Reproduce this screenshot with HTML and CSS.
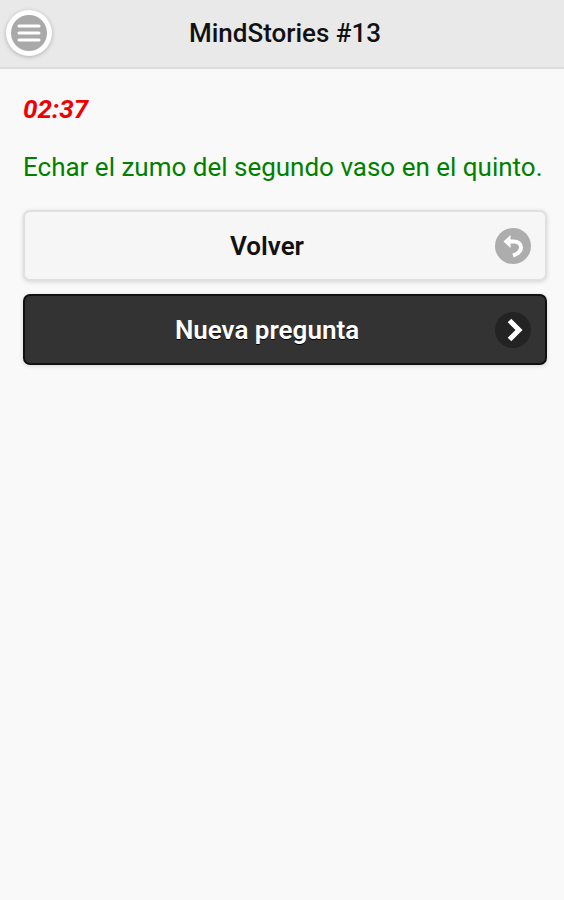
FILE: index.html
```
<!DOCTYPE html>
<html lang="es">
<head>
    <meta charset="UTF-8">
    <meta name="viewport" content="width=device-width, initial-scale=1.0">
    <title>MindStories #13</title>
    <link rel="stylesheet" href="styles.css">
</head>
<body>
    <header class="header">
        <button type="button" class="menu-btn" aria-label="Menú">
            <svg class="icon" viewBox="0 0 36 36">
                <circle cx="18" cy="18" r="18" fill="#a9a9a9"/>
                <path d="M8 11h20M8 18h20M8 25h20" fill="none" stroke="#fff" stroke-width="3" stroke-linecap="round"/>
            </svg>
        </button>
        <h1 class="title">MindStories #13</h1>
    </header>

    <main class="content">
        <p class="timer">02:37</p>
        <p class="answer">Echar el zumo del segundo vaso en el quinto.</p>

        <div class="actions">
            <button type="button" class="btn">
                <span class="btn-text">Volver</span>
                <svg class="icon" viewBox="0 0 36 36">
                    <circle cx="18" cy="18" r="18" fill="#adadad"/>
                    <path d="M14 13.500h4.500c5 0 7.500 2.500 7.500 6 0 4-3.500 6.500-8 8" fill="none" stroke="#fff" stroke-width="4"/>
                    <path d="M8.500 13.500l7-6.500v13z" fill="#fff"/>
                </svg>
            </button>
            <button type="button" class="btn btn-dark">
                <span class="btn-text">Nueva pregunta</span>
                <svg class="icon" viewBox="0 0 36 36">
                    <circle cx="18" cy="18" r="18" fill="#232323"/>
                    <path d="M14.500 8.500l9.500 9.500-9.500 9.500" fill="none" stroke="#fff" stroke-width="5"/>
                </svg>
            </button>
        </div>
    </main>
</body>
</html>
```

FILE: styles.css
```
* {
    margin: 0;
    padding: 0;
    box-sizing: border-box;
}
body {
    font-family: Roboto, sans-serif;
    font-size: 26px;
    line-height: 32px;
    background: #f9f9f9;
    color: #111;
}
.header {
    display: grid;
    grid-template-columns: 46px 1fr 40px;
    align-items: center;
    height: 69px;
    padding: 0 6px 2px;
    background: #e9e9e9;
    border-bottom: 2px solid #dcdcdc;
}
.menu-btn {
    width: 46px;
    height: 46px;
    padding: 5px;
    background: #fff;
    border: none;
    border-radius: 50%;
    box-shadow: 0 1px 4px rgba(0,0,0,0.25);
    cursor: pointer;
}
.icon {
    display: block;
    width: 36px;
    height: 36px;
}
.title {
    font-size: 26px;
    font-weight: 500;
    text-align: center;
    text-shadow: 0 1px 0 #eee;
}
.content {
    padding: 24px 17px 24px 23px;
}
.timer {
    margin-bottom: 26px;
    color: #f00000;
    font-weight: bold;
    font-style: italic;
}
.answer {
    margin-bottom: 27px;
    color: #008000;
}
.actions {
    display: grid;
    gap: 13px;
}
.btn {
    display: flex;
    align-items: center;
    height: 71px;
    padding: 0 14px;
    background: #f6f6f6;
    border: 2px solid #e0e0e0;
    border-radius: 7px;
    box-shadow: 0 1px 4px rgba(0,0,0,0.15);
    color: #111;
    font-family: inherit;
    font-size: 26px;
    font-weight: 600;
    cursor: pointer;
}
.btn-text {
    flex: 1;
    text-align: center;
    text-shadow: 0 1px 0 #f3f3f3;
}
.btn-dark {
    background: #333;
    border-color: #111;
    color: #fff;
}
.btn-dark .btn-text {
    text-shadow: 0 1px 0 #000;
}
```
